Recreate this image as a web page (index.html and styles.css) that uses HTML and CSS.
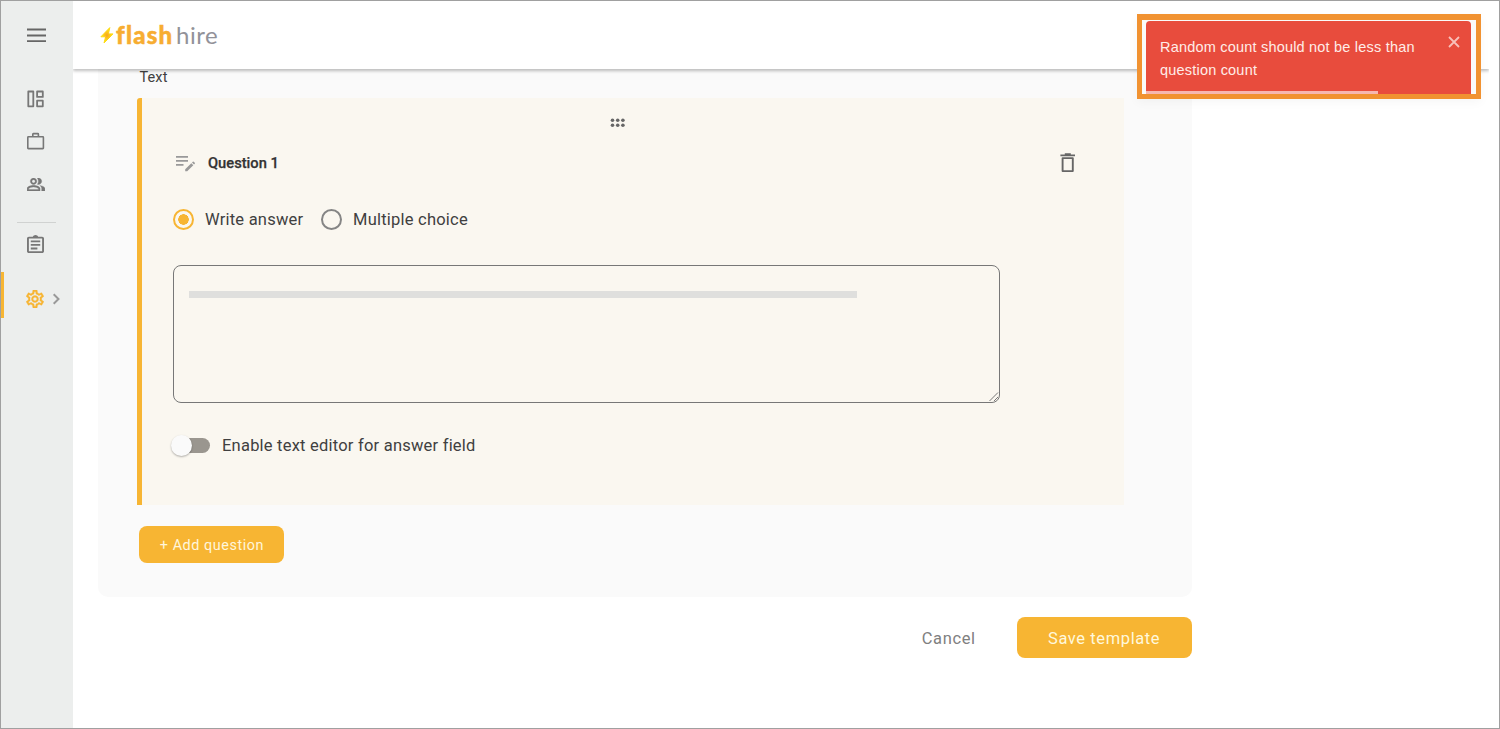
FILE: index.html
```html
<!DOCTYPE html>
<html lang="en">
<head>
<meta charset="utf-8">
<title>Flash Hire</title>
<link rel="stylesheet" href="styles.css">
</head>
<body>
<div class="app">
  <nav class="sidebar">
    <svg class="icon menu" viewBox="0 0 20 14" width="20" height="14"><path d="M0 1.500h19M0 7.500h19M0 13.100h19" stroke="#666" stroke-width="1.800" fill="none"/></svg>
    <svg class="icon dashboard" viewBox="0 0 18 18" width="18" height="18"><path d="M1.300 1.500h5v14.800h-5zM10.100 1.500h5.700v5.400h-5.700zM10.100 10.700h5.700v5.600h-5.700z" fill="none" stroke="#777" stroke-width="1.800" stroke-linejoin="round"/></svg>
    <svg class="icon work" viewBox="0 0 18 18" width="18" height="18"><path d="M1.400 4.800h14.400q.6 0 .6.600v10.600q0 .6-.6.600H1.400q-.6 0-.6-.6V5.400q0-.6.6-.6M5.800 4.500V2.200q0-.6.600-.6h4.400q.6 0 .6.600V4.500" fill="none" stroke="#777" stroke-width="1.600"/></svg>
    <svg class="icon people" viewBox="1 4 22 16" width="18" height="13"><path fill="#777" stroke="#777" stroke-width=".4" d="M16.670 13.130C18.040 14.060 19 15.320 19 17v3h4v-3c0-2.180-3.570-3.470-6.330-3.870zM15 12c2.210 0 4-1.790 4-4s-1.790-4-4-4c-.47 0-.91.100-1.330.240C14.500 5.270 15 6.580 15 8s-.5 2.730-1.330 3.760c.42.140.86.240 1.330.240zM9 12c2.210 0 4-1.790 4-4s-1.790-4-4-4-4 1.790-4 4 1.790 4 4 4zm0-6c1.100 0 2 .9 2 2s-.9 2-2 2-2-.9-2-2 .9-2 2-2zM9 13c-2.670 0-8 1.340-8 4v3h16v-3c0-2.660-5.330-4-8-4zm6 5H3v-.99C3.200 16.290 6.300 15 9 15s5.800 1.290 6 2v1z"/></svg>
    <div class="divider"></div>
    <svg class="icon tasks" viewBox="3 1 18 20" width="17" height="18" preserveAspectRatio="none"><path fill="#777" d="M7 15h7v2H7zm0-4h10v2H7zm0-4h10v2H7zm12-4h-4.180C14.400 1.840 13.300 1 12 1s-2.400.84-2.820 2H5c-1.100 0-2 .9-2 2v14c0 1.100.9 2 2 2h14c1.100 0 2-.9 2-2V5c0-1.100-.9-2-2-2zm0 16H5V5h14v14z"/></svg>
    <div class="active">
      <svg viewBox="2 2 20 20" width="18" height="18"><path fill="#f7b533" stroke="#f7b533" stroke-width=".3" d="M19.430 12.980c.04-.32.070-.64.070-.98s-.03-.66-.07-.98l2.110-1.650c.19-.15.240-.42.120-.64l-2-3.460c-.12-.22-.39-.3-.61-.22l-2.490 1c-.52-.4-1.080-.73-1.690-.98l-.38-2.650C14.460 2.180 14.250 2 14 2h-4c-.25 0-.46.180-.49.420l-.38 2.650c-.61.250-1.170.59-1.690.98l-2.490-1c-.23-.09-.49 0-.61.220l-2 3.460c-.13.220-.07.490.12.640l2.110 1.650c-.04.320-.07.650-.07.980s.03.660.07.980l-2.110 1.650c-.19.150-.24.420-.12.640l2 3.460c.12.220.39.300.61.220l2.490-1c.52.400 1.080.730 1.690.980l.38 2.650c.03.240.24.420.49.420h4c.25 0 .46-.18.490-.42l.38-2.650c.61-.25 1.170-.59 1.690-.98l2.490 1c.23.090.49 0 .61-.22l2-3.460c.12-.22.070-.49-.12-.64l-2.110-1.650zm-1.980-1.710c.04.310.05.520.05.730s-.02.430-.05.730l-.14 1.130.89.700 1.080.84-.7 1.210-1.270-.51-1.040-.42-.9.680c-.43.320-.84.560-1.250.73l-1.060.43-.16 1.130-.2 1.350h-1.400l-.19-1.350-.16-1.130-1.060-.43c-.43-.18-.83-.41-1.230-.71l-.91-.7-1.060.43-1.270.51-.7-1.210 1.080-.84.89-.7-.14-1.130c-.03-.31-.05-.54-.05-.74s.02-.43.050-.73l.14-1.130-.89-.7-1.080-.84.700-1.210 1.270.510 1.040.420.900-.68c.43-.32.840-.56 1.250-.73l1.060-.43.160-1.130.2-1.350h1.390l.19 1.350.16 1.130 1.060.430c.43.180.83.410 1.230.71l.91.700 1.060-.43 1.270-.51.700 1.210-1.070.85-.89.700.14 1.130zM12 8c-2.210 0-4 1.790-4 4s1.790 4 4 4 4-1.790 4-4-1.790-4-4-4zm0 6c-1.100 0-2-.9-2-2s.9-2 2-2 2 .9 2 2-.9 2-2 2z"/></svg>
      <svg viewBox="0 0 8 12" width="8" height="12"><path d="M1.700 1.200 6.500 6l-4.800 4.800" fill="none" stroke="#999" stroke-width="2"/></svg>
    </div>
  </nav>
  <div class="main">
    <header class="topbar">
      <svg class="bolt" viewBox="0 0 14 18" width="14" height="18"><defs><radialGradient id="spark"><stop offset="0" stop-color="#f9a51f"/><stop offset=".7" stop-color="#fddc14"/></radialGradient></defs><path fill="url(#spark)" stroke="url(#spark)" stroke-width="1" stroke-linejoin="round" d="M9.800 1.600.900 10.800h4.700L4 17 13 7.900H8.400z"/></svg>
      <span class="flash">flash</span><span class="hire">hire</span>
    </header>
    <section class="panel">
      <div class="type-label">Text</div>
      <article class="question">
        <svg class="grip" viewBox="0 0 15 9" width="15" height="9"><g fill="#666"><circle cx="2.500" cy="2.300" r="1.800"/><circle cx="7.700" cy="2.300" r="1.800"/><circle cx="12.900" cy="2.300" r="1.800"/><circle cx="2.500" cy="7.200" r="1.800"/><circle cx="7.700" cy="7.200" r="1.800"/><circle cx="12.900" cy="7.200" r="1.800"/></g></svg>
        <div class="question-head">
          <svg viewBox="0 0 20 17" width="20" height="17"><path d="M1 1.900h12M1 5.900h12M1 9.900h7.500" stroke="#999" stroke-width="1.600"/><path fill="#999" d="M10.200 14.300 16.300 8.200l2 2-6.100 6.100H10.200zM17 7.500l.8-.8q.5-.3.900 0l1.100 1.100q.3.500 0 .9l-.8.800z"/></svg>
          <h2>Question 1</h2>
          <svg class="trash" viewBox="0 0 16 20" width="16" height="20"><path d="M2.600 5.100h10.200v13H2.600z" fill="none" stroke="#666" stroke-width="1.900" stroke-linejoin="round"/><path d="M.4 2.300h14.600M4.800 1.200h6" stroke="#666" stroke-width="1.700"/></svg>
        </div>
        <div class="choices">
          <span class="radio checked"></span><span class="write">Write answer</span>
          <span class="radio"></span><span class="multiple">Multiple choice</span>
        </div>
        <div class="answer"><div class="placeholder"></div>
          <svg class="resize" viewBox="0 0 10 10" width="10" height="10"><path d="M.5 9 9 .5M5 9 9 5" stroke="#777" stroke-width="1"/></svg>
        </div>
        <div class="toggle"><span class="switch"><span class="thumb"></span></span><span class="toggle-label">Enable text editor for answer field</span></div>
      </article>
      <button class="add">+ Add question</button>
    </section>
    <footer class="actions"><button class="cancel">Cancel</button><button class="save">Save template</button></footer>
  </div>
  <aside class="highlight">
    <div class="toast">
      <p>Random count should not be less than<br>question count</p>
      <svg viewBox="0 0 12 12" width="12" height="12"><path d="m1 1 10 10M11 1 1 11" stroke="#f8c0ba" stroke-width="1.800"/></svg>
      <div class="progress"></div>
    </div>
  </aside>
</div>
</body>
</html>
```
FILE: styles.css
```css
* { box-sizing: border-box; }
body { margin: 0; font-family: Roboto, sans-serif; color: #404040; }
button { border: 0; padding: 0; font-family: inherit; white-space: nowrap; }
svg { display: block; flex: none; }
span { white-space: nowrap; }
.app { position: relative; display: flex; width: 1500px; height: 729px; border: 1px solid #a0a0a0; background: #fff; overflow: hidden; }

.sidebar { width: 72px; flex: none; background: #eceeed; }
.icon { margin-left: 26px; }
.menu { margin-top: 27px; }
.dashboard { margin-top: 48px; }
.work { margin-top: 24px; }
.people { margin-top: 28px; margin-left: 26px; }
.divider { height: 1px; width: 39px; margin: 31px 0 0 16px; background: #d0d2d1; }
.tasks { margin-top: 12px; }
.active { display: flex; align-items: center; gap: 8px; height: 46px; margin-top: 19px; padding: 7px 0 0 22px; border-left: 3px solid #f7b533; }

.main { width: 1416px; flex: none; }
.topbar { position: relative; z-index: 1; display: flex; width: 1416px; height: 68px; padding: 25px 0 0 27px; background: #fff; box-shadow: 0 2px 3px rgba(0,0,0,.25); clip-path: inset(0 0 -8px 0); }
.flash, .hire { margin-top: -3px; font-family: Lato, sans-serif; font-size: 24px; line-height: 24px; }
.flash { margin-left: 2px; width: 60px; font-weight: 900; color: #f7ad31; letter-spacing: 1.2px; -webkit-text-stroke: .5px #f7ad31; }
.hire { color: #929299; letter-spacing: .5px; }

.panel { width: 1094px; height: 528px; margin-left: 25px; background: #fafafa; border-radius: 0 0 10px 10px; overflow: hidden; }
.type-label { height: 29px; padding-left: 41.500px; font-size: 14.500px; line-height: 17px; letter-spacing: .1px; }
.question { width: 987px; height: 407px; margin-left: 39px; padding: 20px 0 0 31px; background: #faf7f0; border-left: 5px solid #f7b533; border-radius: 3px 0 0 0; }
.grip { margin-left: 437px; }
.question-head { display: flex; align-items: flex-start; height: 62px; margin-top: 27px; padding-left: 2px; }
.question-head > svg:first-child { margin-top: 1px; }
h2 { width: 852px; margin: 0 0 0 13px; font-size: 14.700px; line-height: 18px; font-weight: 500; color: #333; -webkit-text-stroke: .25px #333; }
.trash { margin-top: -1px; }
.choices { display: flex; align-items: center; height: 22px; margin-top: -8px; font-size: 16.500px; letter-spacing: .22px; }
.radio { display: inline-flex; width: 21px; height: 21px; flex: none; border: 2px solid #858585; border-radius: 50%; }
.checked { border-color: #f7b533; background: radial-gradient(circle, #f7b533 0 5px, transparent 5.500px); }
.write { width: 116px; padding-left: 11px; margin-right: 11px; }
.multiple { padding-left: 11px; }
.answer { position: relative; width: 827px; height: 138px; margin-top: 35px; padding: 25px 15px; border: 1px solid #777; border-radius: 8px; }
.placeholder { width: 668px; height: 7px; background: #dfdfdd; }
.resize { position: absolute; right: 0; bottom: 0; }
.toggle { display: flex; align-items: center; height: 24px; margin-top: 30px; }
.switch { position: relative; width: 34px; height: 15px; margin-left: 3px; background: #9a968f; border-radius: 8px; }
.thumb { position: absolute; left: -5px; top: -3px; width: 21px; height: 21px; background: #fafafa; border-radius: 50%; box-shadow: 0 1px 2px rgba(0,0,0,.3); }
.toggle-label { margin-left: 12px; font-size: 16.500px; letter-spacing: .22px; }
.add { display: block; width: 145px; height: 37px; margin: 21px 0 0 41.400px; padding-top: 1px; color: #fff6dc; background: #f7b533; border-radius: 8px; font-size: 14.400px; letter-spacing: .55px; }
.actions { display: flex; justify-content: flex-end; gap: 41px; width: 1118.600px; margin-top: 20px; }
.cancel, .save { height: 41px; padding-top: 1px; font-size: 16.500px; letter-spacing: .6px; }
.cancel { color: #808080; background: none; }
.save { width: 175px; color: #fff8dc; background: #f7b533; border-radius: 8px; }

.highlight { position: absolute; z-index: 2; left: 1136px; top: 13px; width: 344px; height: 85px; padding: 1px 4px 0; border: 5px solid #f19231; border-top-width: 6px; background: #fafafa; box-shadow: 0 3px 10px rgba(0,0,0,.04); }
.toast { position: relative; display: flex; width: 325px; height: 73px; padding: 15px 10px 0 14px; background: #e84c3d; color: #ffece8; border-radius: 4px 4px 0 0; font-family: "Liberation Sans", sans-serif; }
.toast p { width: 288px; margin: 0; font-size: 14.500px; line-height: 23px; letter-spacing: .2px; white-space: nowrap; }
.progress { position: absolute; left: 0; bottom: 0; width: 232px; height: 3px; background: #f6b7b0; }
```
